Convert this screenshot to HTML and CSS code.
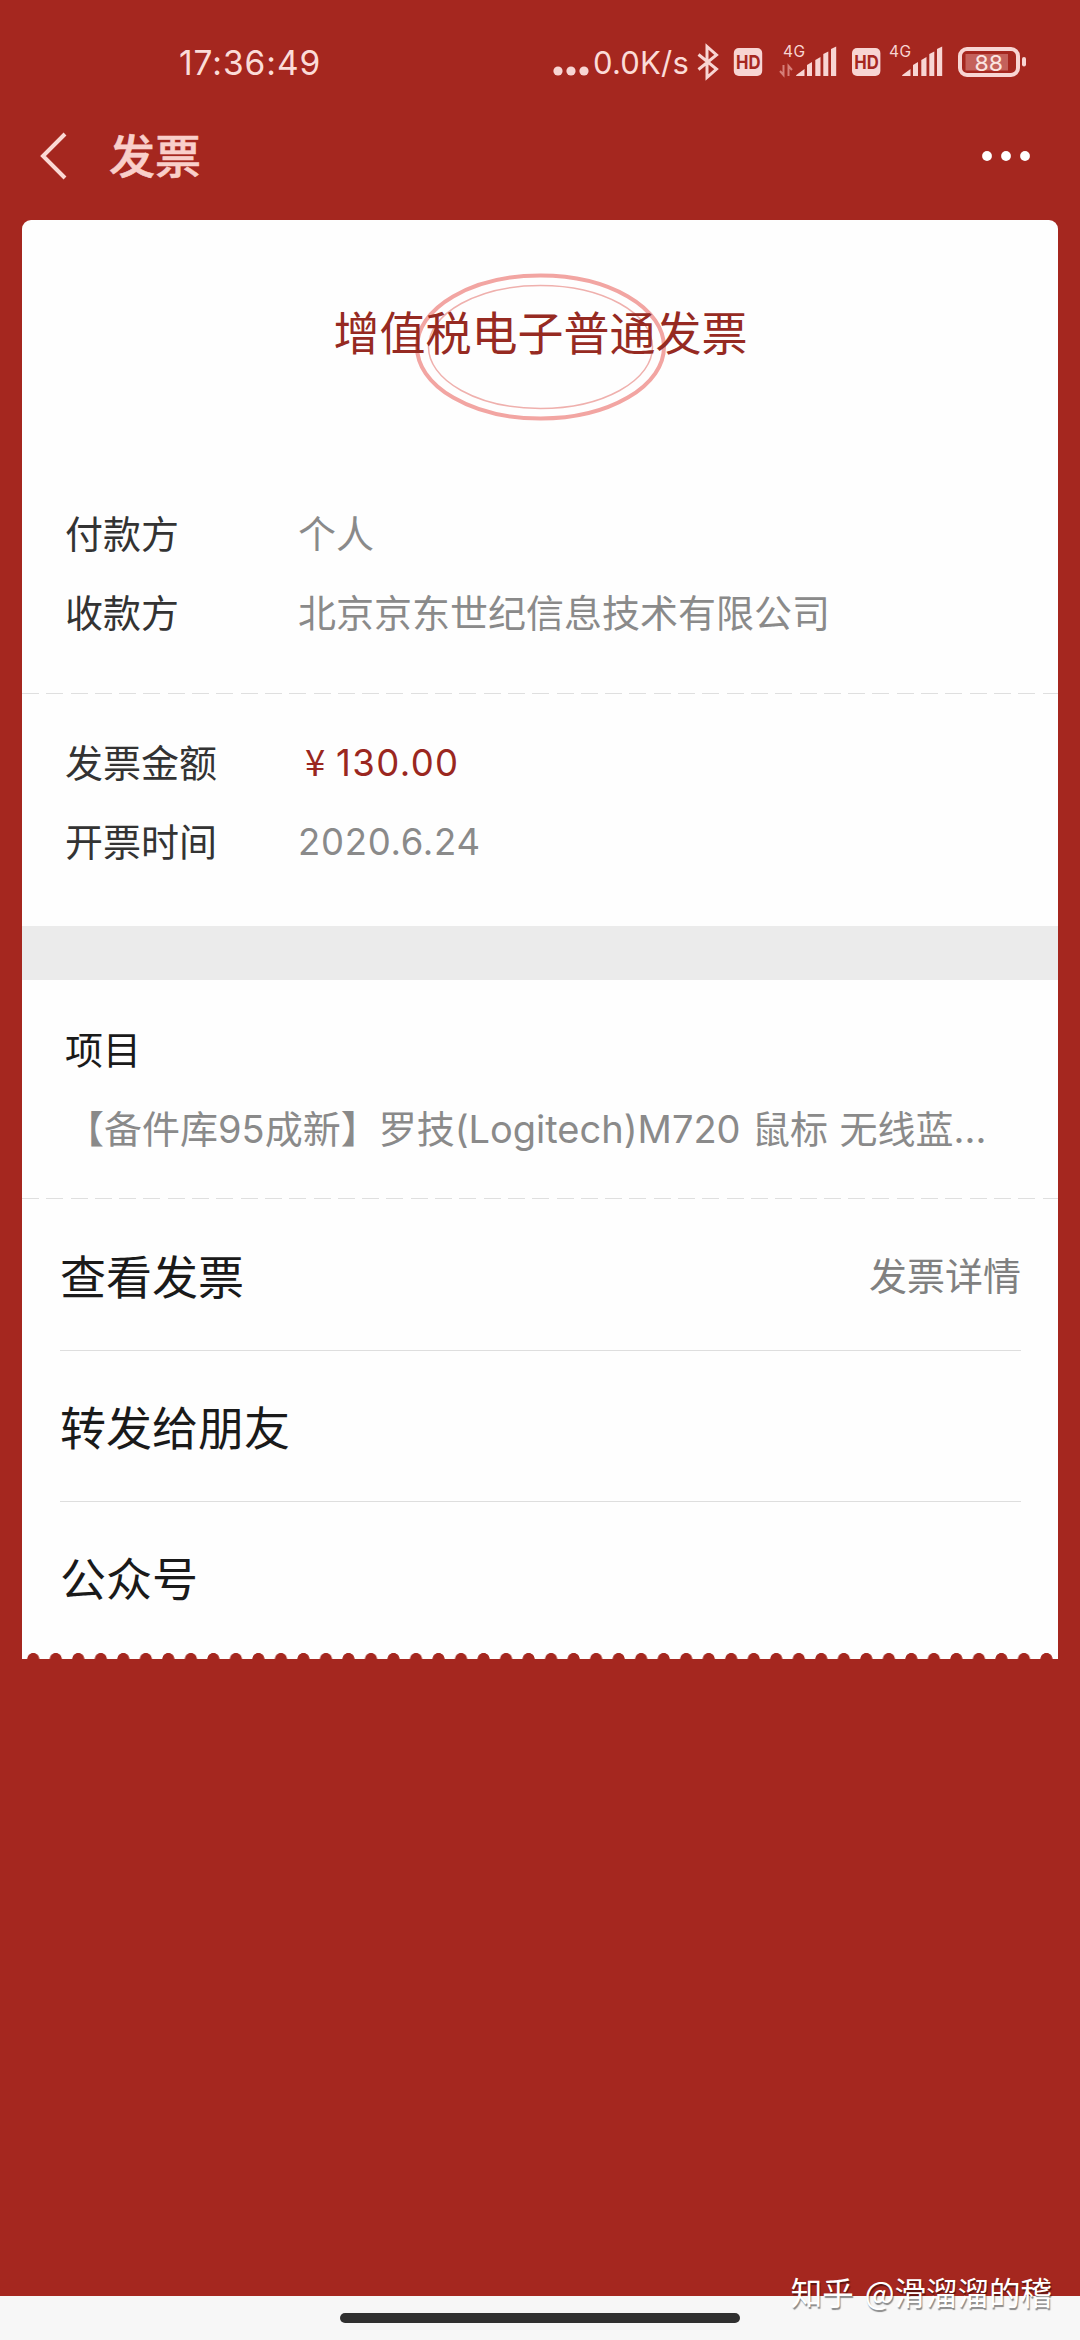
FILE: index.html
```html
<!DOCTYPE html>
<html lang="zh-CN">
<head>
<meta charset="utf-8">
<title>发票</title>
<link rel="stylesheet" href="styles.css">
</head>
<body>
<div class="screen">
  <header class="status">
    <span class="clock">17:36:49</span>
    <div class="status-right">
      <svg class="speed-dots" width="36" height="12" viewBox="0 0 36 12"><circle cx="5" cy="6" r="4.600"/><circle cx="18" cy="6" r="4.600"/><circle cx="31" cy="6" r="4.600"/></svg>
      <span class="speed">0.0K/s</span>
      <svg class="status-icons" width="340" height="40" viewBox="690 42 340 40">
        <path class="line" d="M698.500 54.500L716.500 69L707 77.500V46.500L716.500 55L698.500 69.500"/>
        <rect x="733.800" y="48" width="28.400" height="28" rx="5"/>
        <text class="hd" x="736" y="69" textLength="24.500" lengthAdjust="spacingAndGlyphs">HD</text>
        <text class="net" x="783" y="57" textLength="22">4G</text>
        <path class="traffic" d="M783.500 65V75L780 71M788.500 76V66L792 70"/>
        <g id="bars">
          <path d="M804.500 69V76H796Q796 75 797 74.500Z"/>
          <path d="M807 65L812 62V76H807Z"/><path d="M815.300 60L820.500 57V76H815.300Z"/>
          <path d="M823.300 54L828.300 51.500V76H823.300Z"/><path d="M831 49L836.200 46.500V76H831Z"/>
        </g>
        <rect x="852" y="48" width="28.400" height="28" rx="5"/>
        <text class="hd" x="854.200" y="69" textLength="24.500" lengthAdjust="spacingAndGlyphs">HD</text>
        <text class="net" x="889" y="57" textLength="22">4G</text>
        <use href="#bars" x="106"/>
        <rect class="cell" x="960" y="49" width="58" height="26" rx="7"/>
        <rect x="1022" y="57" width="4" height="9.500" rx="2"/>
        <rect class="charge" x="965.500" y="54" width="42.500" height="16.500"/>
        <text class="level" x="974.500" y="70.500" textLength="28.500" lengthAdjust="spacingAndGlyphs">88</text>
      </svg>
    </div>
  </header>
  <nav class="nav">
    <svg class="back" width="28" height="50" viewBox="0 0 28 50"><path d="M25 3L3 25L25 47"/></svg>
    <h1 class="nav-title">发票</h1>
    <svg class="more" width="50" height="12" viewBox="0 0 50 12"><circle cx="6" cy="6" r="4.900"/><circle cx="25" cy="6" r="4.900"/><circle cx="44" cy="6" r="4.900"/></svg>
  </nav>
  <main class="card">
    <section class="heading">
      <svg class="stamp" width="254" height="150" viewBox="0 0 254 150"><ellipse class="outer" cx="126.500" cy="75" rx="123.500" ry="71.500"/><ellipse class="inner" cx="126.500" cy="75" rx="112" ry="61.500"/></svg>
      <h2 class="heading-text">增值税电子普通发票</h2>
    </section>
    <dl class="facts parties">
      <dt>付款方</dt><dd>个人</dd>
      <dt>收款方</dt><dd>北京京东世纪信息技术有限公司</dd>
    </dl>
    <div class="dashes"></div>
    <dl class="facts amounts">
      <dt>发票金额</dt><dd class="price"><span class="yen">¥</span>130.00</dd>
      <dt>开票时间</dt><dd class="date">2020.6.24</dd>
    </dl>
    <div class="band"></div>
    <section class="item">
      <h3 class="item-title">项目</h3>
      <p class="item-name">【备件库95成新】罗技(Logitech)M720 鼠标 无线蓝<span class="dots">...</span></p>
    </section>
    <div class="dashes"></div>
    <ul class="actions">
      <li class="action"><span>查看发票</span><span class="action-note">发票详情</span></li>
      <li class="action"><span>转发给朋友</span></li>
      <li class="action"><span>公众号</span></li>
    </ul>
    <div class="scallops"></div>
  </main>
  <footer class="gesture"><div class="pill"></div></footer>
  <div class="watermark">知乎 @滑溜溜的稽</div>
</div>
</body>
</html>
```
FILE: styles.css
```css
* { box-sizing: border-box; margin: 0; padding: 0; }
body { background: #a5271f; }
.screen {
  position: relative;
  width: 1080px;
  height: 2340px;
  display: flex;
  flex-direction: column;
  overflow: hidden;
  background: #a5271f;
  font-family: Inter, "Noto Sans CJK SC", sans-serif;
  font-weight: 400;
  white-space: nowrap;
}

.status {
  height: 96px;
  padding: 26px 50px 0 179px;
  display: flex;
  justify-content: space-between;
  align-items: flex-start;
  color: #fbdcd8;
  line-height: 74px;
}
.clock { font-size: 33.500px; letter-spacing: .95px; }
.status-right { display: flex; align-items: flex-start; fill: #f8d5d3; }
.speed-dots { margin: 39px 4px 0 0; }
.speed { width: 97px; font-size: 31px; letter-spacing: .2px; }
.status-icons { margin-top: 16px; }
.line { fill: none; stroke: #f8d5d3; stroke-width: 3; stroke-linejoin: miter; }
.traffic { fill: none; stroke: #d67f79; stroke-width: 2; }
.hd { fill: #a5271f; font-size: 19px; font-weight: 700; }
.net { font-size: 15.500px; }
.cell { fill: none; stroke: #f8d5d3; stroke-width: 4; }
.charge { fill: #c4615b; }
.level { font-size: 21.500px; fill: #fbe4e1; }

.nav {
  height: 124px;
  padding: 0 49px 5px 40px;
  display: flex;
  align-items: center;
}
.back { fill: none; stroke: #fbd9d4; stroke-width: 4; }
.nav-title { margin-left: 41px; font-size: 46px; line-height: 60px; font-weight: 500; -webkit-text-stroke: .6px #f9cfca; color: #f9cfca; }
.more { margin-left: auto; fill: #fff; }

.card { width: 1036px; margin: 0 22px; background: #fefefe; border-radius: 9px 9px 0 0; }
.heading { position: relative; height: 275px; padding: 78px 0 0 1px; text-align: center; }
.heading-text { font-size: 46px; line-height: 70px; font-weight: 400; color: #962a22; position: relative; }
.stamp { position: absolute; left: 392px; top: 52px; fill: none; }
.outer { stroke: #f2a5a2; stroke-width: 4; }
.inner { stroke: #efb0ad; stroke-width: 1.500; }

.facts {
  display: grid;
  grid-template-columns: 233px 1fr;
  grid-auto-rows: 79px;
  padding-left: 43px;
  font-size: 38px;
  line-height: 79px;
  color: #333;
}
.facts dd { color: #8a8a8a; }
.parties { height: 198px; }
.amounts { height: 232px; padding-top: 30px; }
.facts .price { color: #9a2720; font-size: 36.500px; letter-spacing: 1.400px; }
.yen { display: inline-block; width: 38px; padding-left: 7px; font-family: "Noto Sans CJK SC", sans-serif; line-height: 1; }
.facts .date { font-size: 36.500px; letter-spacing: .7px; }
.dashes { height: 1px; background: repeating-linear-gradient(90deg, #dfdfdf 0 17px, transparent 17px 24.300px); }
.band { height: 54px; background: #ebebeb; }
.item { height: 218px; padding: 31px 43px 0; font-size: 38px; line-height: 79px; color: #1a1a1a; }
.item-title { font: inherit; }
.item-name { color: #8a8a8a; margin-left: 1px; word-spacing: .8px; }

.actions { list-style: none; height: 454px; padding: 1px 37px 0 38px; }
.action {
  height: 151px;
  padding-bottom: 3px;
  display: flex;
  align-items: center;
  justify-content: space-between;
  font-size: 46px;
  color: #1a1a1a;
  border-bottom: 1px solid #dedede;
}
.action:last-child { border-bottom: 0; }
.action-note { font-size: 38px; color: #808080; }
.scallops {
  height: 6px;
  background: radial-gradient(circle at 50% 100%, #a5271f 5.700px, transparent 6.300px) 0 0 / 22.520px 6px repeat-x;
}

.gesture { margin-top: auto; height: 44px; padding-top: 17px; background: #f7f7f7; }
.pill { width: 400px; height: 10px; margin: 0 auto; border-radius: 5px; background: #303030; }
.watermark {
  position: absolute;
  right: 28px;
  bottom: 26px;
  font: 31.500px/46px "Noto Sans CJK SC", sans-serif;
  word-spacing: 4px;
  color: #fff;
  text-shadow: 1px 2px 1px rgba(0, 0, 0, .45);
}
```
